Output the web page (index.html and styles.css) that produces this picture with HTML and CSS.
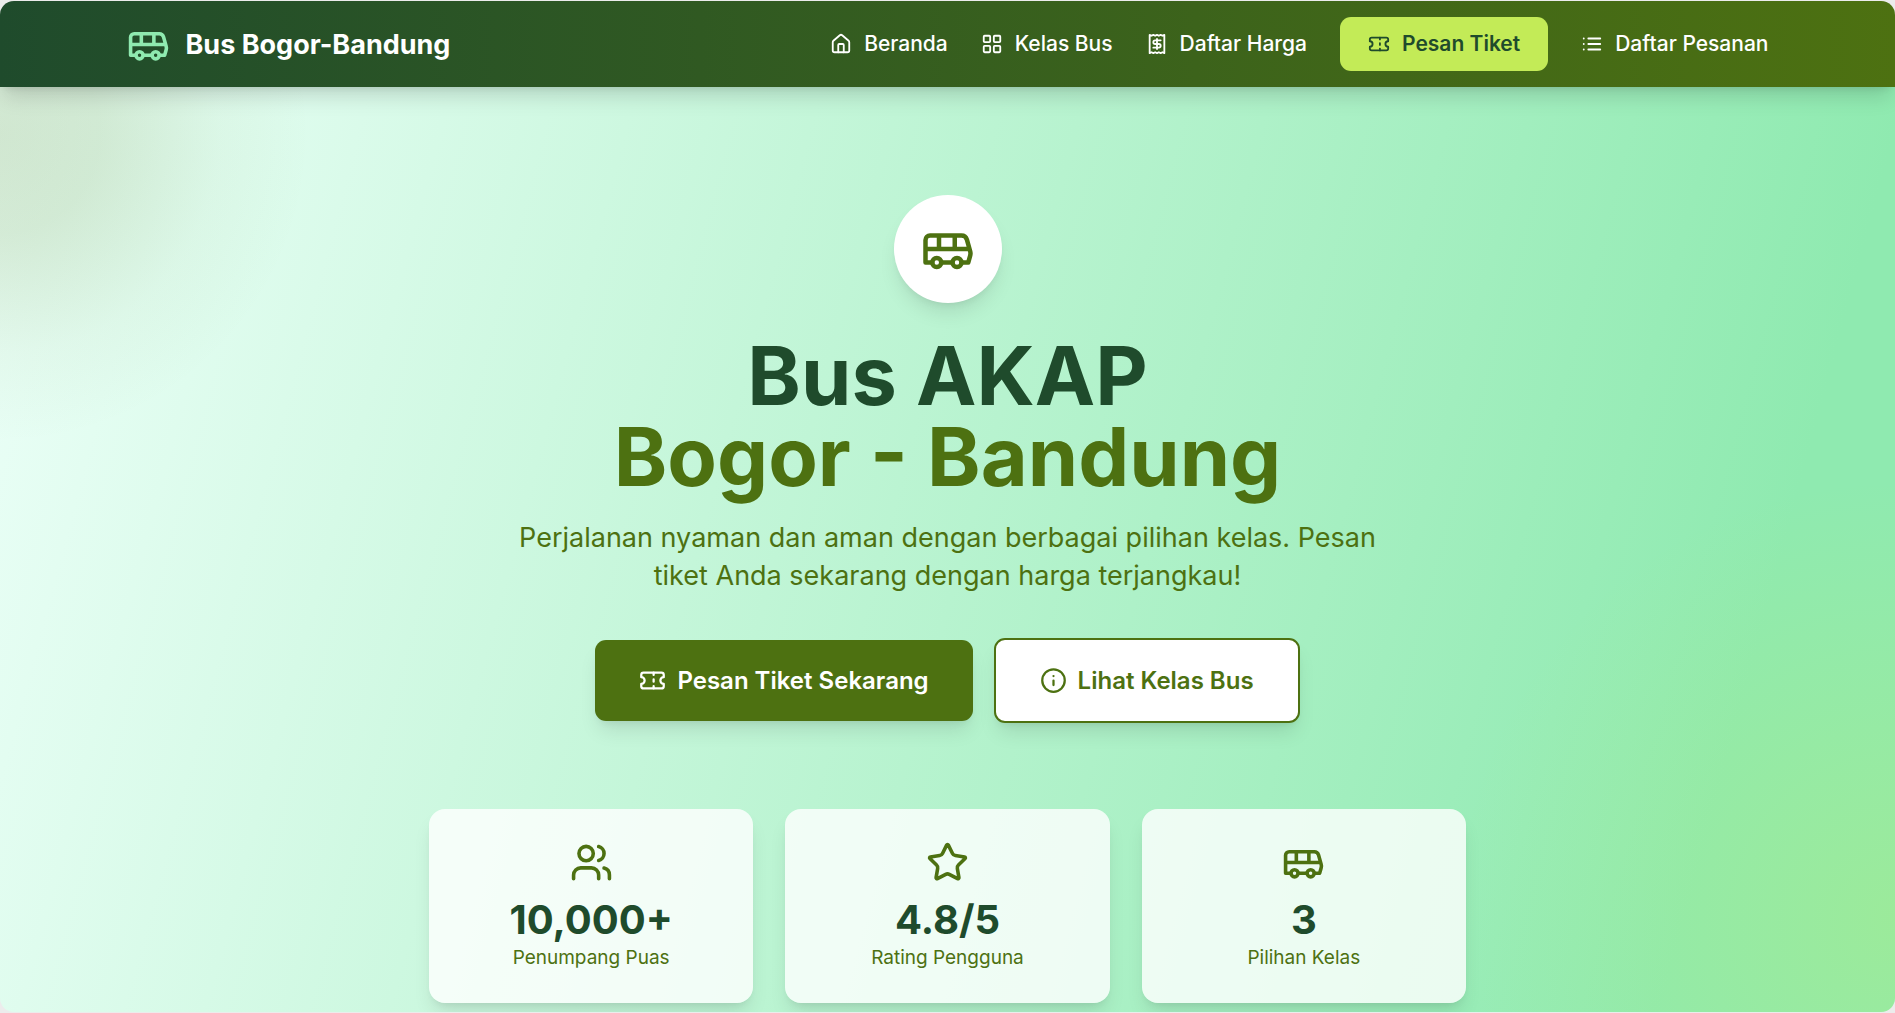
FILE: index.html
```html
<!DOCTYPE html>
<html lang="id">
<head>
<meta charset="utf-8">
<meta name="viewport" content="width=device-width, initial-scale=1">
<title>Bus Bogor-Bandung</title>
<link rel="stylesheet" href="styles.css">
</head>
<body>
<svg class="sprite" aria-hidden="true">
  <symbol id="bus" viewBox="0 0 24 24"><path d="M8 6v6M15 6v6M2 12h19.600M18 18h3s.5-1.700.8-2.800c.1-.4.2-.8.2-1.200 0-.4-.1-.8-.2-1.200l-1.400-5C20.100 6.800 19.100 6 18 6H4a2 2 0 0 0-2 2v10h3M9 18h5"/><circle cx="7" cy="18" r="2"/><circle cx="16" cy="18" r="2"/></symbol>
  <symbol id="ticket" viewBox="0 0 24 24"><path d="M2 9a3 3 0 0 1 0 6v2a2 2 0 0 0 2 2h16a2 2 0 0 0 2-2v-2a3 3 0 0 1 0-6V7a2 2 0 0 0-2-2H4a2 2 0 0 0-2 2Z"/><path d="M13 5v2M13 17v2M13 11v2"/></symbol>
</svg>
<div class="page">
<header class="topbar">
  <div class="container topbar-inner">
    <a class="brand" href="#"><svg class="icon brand-icon"><use href="#bus"/></svg>Bus Bogor-Bandung</a>
    <nav class="menu">
      <a href="#"><svg class="icon" viewBox="0 0 24 24"><path d="M15 21v-8a1 1 0 0 0-1-1h-4a1 1 0 0 0-1 1v8"/><path d="M3 10a2 2 0 0 1 .709-1.528l7-5.999a2 2 0 0 1 2.582 0l7 5.999A2 2 0 0 1 21 10v9a2 2 0 0 1-2 2H5a2 2 0 0 1-2-2z"/></svg>Beranda</a>
      <a href="#"><svg class="icon" viewBox="0 0 24 24"><rect x="3" y="3" width="7" height="7" rx="1"/><rect x="14" y="3" width="7" height="7" rx="1"/><rect x="14" y="14" width="7" height="7" rx="1"/><rect x="3" y="14" width="7" height="7" rx="1"/></svg>Kelas Bus</a>
      <a href="#"><svg class="icon" viewBox="0 0 24 24"><path d="M4 2v20l2-1 2 1 2-1 2 1 2-1 2 1 2-1 2 1V2l-2 1-2-1-2 1-2-1-2 1-2-1-2 1Z"/><path d="M16 8h-6a2 2 0 1 0 0 4h4a2 2 0 1 1 0 4H8"/><path d="M12 17.500v-11"/></svg>Daftar Harga</a>
      <a class="menu-cta" href="#"><svg class="icon"><use href="#ticket"/></svg>Pesan Tiket</a>
      <a href="#"><svg class="icon" viewBox="0 0 24 24"><path d="M3 12h.010M3 18h.010M3 6h.010M8 12h13M8 18h13M8 6h13"/></svg>Daftar Pesanan</a>
    </nav>
  </div>
</header>
<main class="hero">
  <div class="badge"><svg class="icon badge-icon"><use href="#bus"/></svg></div>
  <h1>Bus AKAP<span>Bogor - Bandung</span></h1>
  <p class="lead">Perjalanan nyaman dan aman dengan berbagai pilihan kelas. Pesan tiket Anda sekarang dengan harga terjangkau!</p>
  <div class="actions">
    <button class="btn btn-primary" type="button"><svg class="icon"><use href="#ticket"/></svg>Pesan Tiket Sekarang</button>
    <button class="btn btn-outline" type="button"><svg class="icon" viewBox="0 0 24 24"><circle cx="12" cy="12" r="10"/><path d="M12 16v-4M12 8h.010"/></svg>Lihat Kelas Bus</button>
  </div>
  <section class="stats">
    <article class="stat"><svg class="icon" viewBox="0 0 24 24"><path d="M16 21v-2a4 4 0 0 0-4-4H6a4 4 0 0 0-4 4v2"/><circle cx="9" cy="7" r="4"/><path d="M22 21v-2a4 4 0 0 0-3-3.870M16 3.130a4 4 0 0 1 0 7.750"/></svg><strong>10,000+</strong><span>Penumpang Puas</span></article>
    <article class="stat"><svg class="icon" viewBox="0 0 24 24"><path d="M11.525 2.295a.53.53 0 0 1 .95 0l2.310 4.679a2.123 2.123 0 0 0 1.595 1.160l5.166.756a.53.53 0 0 1 .294.904l-3.736 3.638a2.123 2.123 0 0 0-.611 1.878l.882 5.140a.53.53 0 0 1-.771.560l-4.618-2.428a2.122 2.122 0 0 0-1.973 0L6.396 21.010a.53.53 0 0 1-.770-.560l.881-5.139a2.122 2.122 0 0 0-.611-1.879L2.160 9.795a.53.53 0 0 1 .294-.906l5.165-.755a2.122 2.122 0 0 0 1.597-1.160z"/></svg><strong>4.8/5</strong><span>Rating Pengguna</span></article>
    <article class="stat"><svg class="icon"><use href="#bus"/></svg><strong>3</strong><span>Pilihan Kelas</span></article>
  </section>
</main>
</div>
</body>
</html>
```
FILE: styles.css
```css
:root {
  --forest: #1f4b2c;
  --olive: #4d7111;
  --mint: #8feab0;
  --lime: #c3eb57;
}
* { box-sizing: border-box; }
body {
  margin: 0;
  padding: 1px 0;
  background: #ececec;
  font-family: Inter, "Liberation Sans", sans-serif;
  color: var(--forest);
}
.sprite { position: absolute; width: 0; height: 0; }
.page {
  border-radius: 14px;
  overflow: hidden;
}
.icon {
  width: 22px;
  height: 22px;
  flex: none;
  fill: none;
  stroke: currentColor;
  stroke-width: 2;
  stroke-linecap: round;
  stroke-linejoin: round;
}
.topbar {
  position: relative;
  z-index: 1;
  background: linear-gradient(to right, var(--forest), var(--olive));
  box-shadow: 0 13px 20px -4px rgb(0 0 0 / 14%), 0 5px 8px -5px rgb(0 0 0 / 12%);
}
.container {
  max-width: 1696px;
  margin: 0 auto;
  padding: 16px 27px;
}
.topbar-inner {
  display: flex;
  align-items: center;
  justify-content: space-between;
}
.brand {
  display: flex;
  align-items: center;
  gap: 16px;
  color: #fff;
  font-size: 27px;
  font-weight: 700;
  text-decoration: none;
}
.brand-icon { width: 43px; height: 43px; color: var(--mint); }
.menu {
  display: flex;
  align-items: center;
  gap: 33px;
}
.menu a {
  display: flex;
  align-items: center;
  gap: 12px;
  color: #fff;
  font-size: 21px;
  font-weight: 500;
  line-height: 32px;
  text-decoration: none;
}
.menu .menu-cta {
  padding: 11px 28px;
  border-radius: 11px;
  background: var(--lime);
  color: var(--forest);
  font-weight: 600;
}
.hero {
  display: flex;
  flex-direction: column;
  align-items: center;
  min-height: calc(100vh - 88px);
  padding: 108px 27px 8px;
  text-align: center;
  background:
    radial-gradient(circle at 0 5%, rgb(77 113 17 / 17%), rgb(77 113 17 / 14%) 100px, rgb(77 113 17 / 4%) 220px, transparent 310px),
    radial-gradient(circle at 100% 90%, rgb(195 235 87 / 24%), transparent 440px),
    linear-gradient(105deg, #ecfff8, #8feab0 89%);
}
.badge {
  display: grid;
  place-items: center;
  width: 108px;
  height: 108px;
  border-radius: 50%;
  background: #fff;
  color: var(--olive);
  box-shadow: 0 13px 20px -4px rgb(0 0 0 / 10%), 0 5px 8px -5px rgb(0 0 0 / 10%);
}
.badge-icon { width: 54px; height: 54px; }
h1 {
  margin: 33px 0 21px;
  font-size: 81px;
  font-weight: 700;
  line-height: 81px;
}
h1 span { display: block; color: var(--olive); }
.lead {
  max-width: 904px;
  margin: 0 0 43px;
  color: var(--olive);
  font-size: 27px;
  line-height: 38px;
}
.actions {
  display: flex;
  align-items: center;
  justify-content: center;
  flex-wrap: wrap;
  gap: 21px;
}
.btn {
  display: flex;
  align-items: center;
  gap: 11px;
  padding: 22px 44px;
  border: 0;
  border-radius: 11px;
  font: 600 24px/37px Inter, "Liberation Sans", sans-serif;
  box-shadow: 0 13px 20px -4px rgb(0 0 0 / 10%), 0 5px 8px -5px rgb(0 0 0 / 10%);
}
.btn .icon { width: 27px; height: 27px; }
.btn-primary { background: var(--olive); color: #fff; }
.btn-outline { border: 2px solid var(--olive); background: #fff; color: var(--olive); }
.stats {
  display: grid;
  grid-template-columns: repeat(3, 1fr);
  gap: 32px;
  width: 100%;
  max-width: 1037px;
  margin-top: 86px;
}
.stat {
  display: flex;
  flex-direction: column;
  align-items: center;
  padding: 32px;
  border-radius: 16px;
  background: rgb(255 255 255 / 80%);
  box-shadow: 0 13px 20px -4px rgb(0 0 0 / 10%), 0 5px 8px -5px rgb(0 0 0 / 10%);
}
.stat .icon { width: 43px; height: 43px; margin-bottom: 12px; color: var(--olive); }
.stat strong { font-size: 40px; line-height: 48px; }
.stat span { color: var(--olive); font-size: 19px; line-height: 27px; }
```
